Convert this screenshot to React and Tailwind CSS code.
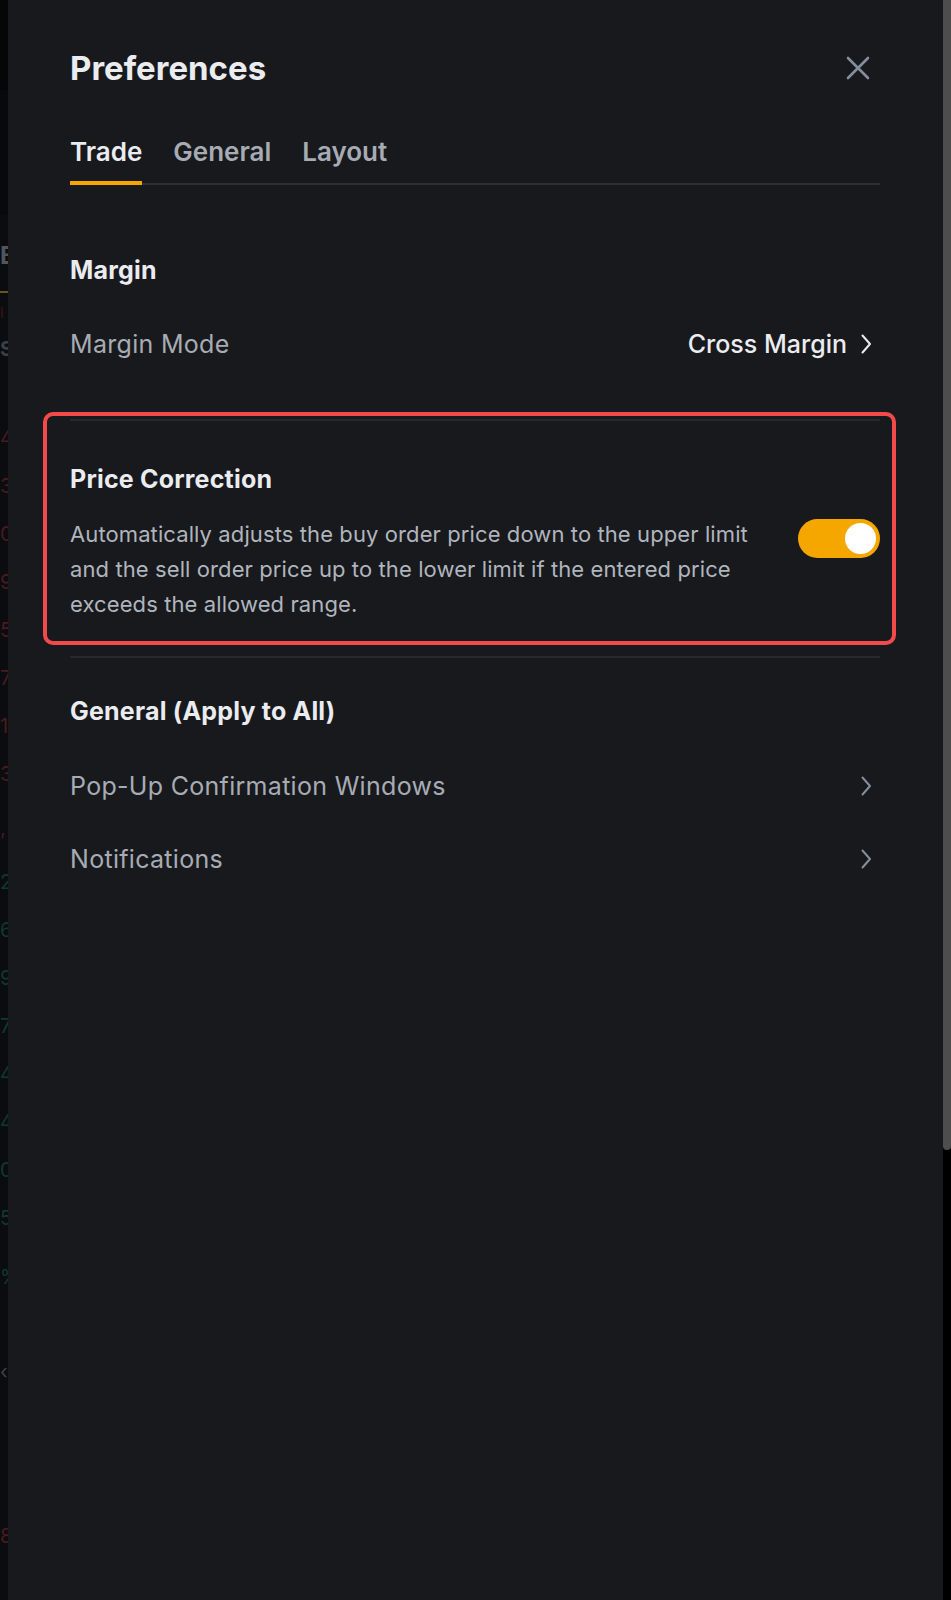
import React from "react";

function Chevron({ className }) {
  return (
    <svg width="14" height="22" viewBox="0 0 14 22" fill="none" className={className}>
      <path d="M3.5 2.5 L11 11 L3.5 19.5" stroke="currentColor" strokeWidth="2" strokeLinecap="round" strokeLinejoin="round" />
    </svg>
  );
}

function StripChar({ c, color, h = "h-[48px]" }) {
  return (
    <div className={`${h} flex items-center text-[20px] leading-none ${color}`}>{c}</div>
  );
}

export default function App() {
  const red = "text-[#4a1a1e]";
  const green = "text-[#0f3a2a]";
  return (
    <div className="flex w-[951px] h-[1600px] bg-black overflow-hidden font-['Inter','Noto_Sans',sans-serif]">
      {/* underlying page peeking out */}
      <div className="w-[8px] shrink-0 overflow-hidden bg-[#0a0c0f] flex flex-col">
        <div className="h-[90px] bg-[#050608]" />
        <div className="h-[125px] bg-[#07090c]" />
        <div className="h-[28px]" />
        <div className="h-[26px] flex items-center text-[24px] font-bold text-[#50555d]">B</div>
        <div className="h-[22px]" />
        <div className="h-[2px] bg-[#6b5418]" />
        <div className="h-[14px]" />
        <div className="h-[10px] flex items-center text-[14px] text-[#3a1418]">I</div>
        <div className="h-[20px]" />
        <div className="h-[24px] flex items-center text-[20px] font-bold text-[#3a3f46]">S</div>
        <div className="h-[53px]" />
        <StripChar c="4" color={red} />
        <StripChar c="3" color={red} />
        <StripChar c="0" color={red} />
        <StripChar c="9" color={red} />
        <StripChar c="5" color={red} />
        <StripChar c="7" color={red} />
        <StripChar c="1" color={red} />
        <StripChar c="3" color={red} />
        <StripChar c="," color={red} h="h-[60px]" />
        <StripChar c="2" color={green} />
        <StripChar c="6" color={green} />
        <StripChar c="9" color={green} />
        <StripChar c="7" color={green} />
        <StripChar c="4" color={green} />
        <StripChar c="4" color={green} />
        <StripChar c="0" color={green} />
        <StripChar c="5" color={green} />
        <StripChar c="%" color={green} h="h-[70px]" />
        <div className="h-[20px]" />
        <StripChar c="‹" color="text-[#3d424a]" h="h-[80px]" />
        <div className="h-[100px]" />
        <StripChar c="8" color="text-[#4a1a1e]" />
      </div>

      {/* panel */}
      <div className="relative flex-1 bg-[#18191d] pl-[62px] pr-[63px] pt-[48px]">
        {/* header */}
        <div className="flex items-center justify-between h-[40px]">
          <div className="text-[33px] font-bold leading-[40px] text-[#eaecef]">Preferences</div>
          <svg width="24" height="24" viewBox="0 0 24 24" fill="none" className="text-[#848e9c] mr-[10px]">
            <path d="M2 2 L22 22 M22 2 L2 22" stroke="currentColor" strokeWidth="2.6" strokeLinecap="round" />
          </svg>
        </div>

        {/* tabs */}
        <div className="mt-[48px] flex gap-[31px] border-b-2 border-[#2b2f36]">
          <div className="pb-[13px] -mb-[2px] border-b-4 border-[#f5a700] text-[26px] leading-[32px] font-semibold text-[#eaecef]">Trade</div>
          <div className="pb-[13px] text-[26px] leading-[32px] font-semibold text-[#a7acb4]">General</div>
          <div className="pb-[13px] text-[26px] leading-[32px] font-semibold text-[#a7acb4]">Layout</div>
        </div>

        {/* Margin section */}
        <div className="mt-[69px] text-[25px] leading-[32px] font-bold tracking-[0.2px] text-[#eaecef]">Margin</div>
        <div className="mt-[42px] flex items-center justify-between h-[32px]">
          <div className="text-[25px] leading-[32px] tracking-[0.3px] text-[#a7acb4]">Margin Mode</div>
          <div className="flex items-center gap-[12px]">
            <span className="text-[25px] leading-[32px] font-medium text-[#eaecef]">Cross Margin</span>
            <Chevron className="text-[#eaecef] mr-[7px]" />
          </div>
        </div>

        <div className="mt-[59px] h-[2px] bg-[#25282e]" />

        {/* Price correction */}
        <div className="mt-[42px] text-[25px] leading-[32px] font-bold tracking-[0.2px] text-[#eaecef]">Price Correction</div>
        <div className="mt-[22px] flex items-start gap-[24px]">
          <p className="flex-1 text-[22px] leading-[35px] tracking-[0.1px] text-[#b0b5bd]">
            Automatically adjusts the buy order price down to the upper limit and the sell order price up to the lower limit if the entered price exceeds the allowed range.
          </p>
          <div className="mt-[2px] w-[82px] h-[39px] shrink-0 rounded-full bg-[#f5a700] flex items-center justify-end pr-[4px]">
            <div className="w-[31px] h-[31px] rounded-full bg-white" />
          </div>
        </div>

        <div className="mt-[34px] h-[2px] bg-[#25282e]" />

        {/* General */}
        <div className="mt-[37px] text-[25px] leading-[32px] font-bold tracking-[0.2px] text-[#eaecef]">General (Apply to All)</div>
        <div className="mt-[43px] flex items-center justify-between h-[32px]">
          <div className="text-[25px] leading-[32px] tracking-[0.3px] text-[#a7acb4]">Pop-Up Confirmation Windows</div>
          <Chevron className="text-[#848e9c] mr-[7px]" />
        </div>
        <div className="mt-[41px] flex items-center justify-between h-[32px]">
          <div className="text-[25px] leading-[32px] tracking-[0.3px] text-[#a7acb4]">Notifications</div>
          <Chevron className="text-[#848e9c] mr-[7px]" />
        </div>

        {/* annotation highlight */}
        <div className="absolute left-[35px] top-[412px] w-[853px] h-[233px] rounded-[10px] border-4 border-[#f24a4a] pointer-events-none" />
      </div>

      {/* scrollbar */}
      <div className="w-[8px] shrink-0 bg-black">
        <div className="h-[1150px] bg-[#4d4d4d] rounded-b-[4px]" />
      </div>
    </div>
  );
}
